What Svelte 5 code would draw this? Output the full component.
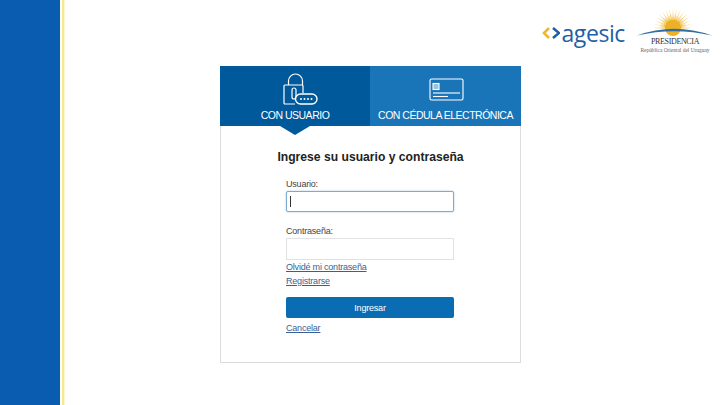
<script lang="ts">
  // sun rays for the presidency logo, alternating long and short
  const rays = Array.from({ length: 33 }, (_, i) => {
    const a = Math.PI + (i * Math.PI) / 32;
    const r = i % 2 ? 14 : 20;
    const cx = 36, cy = 21;
    const w = 0.07;
    const p = (ang: number, rad: number) =>
      `${(cx + Math.cos(ang) * rad).toFixed(1)},${(cy + Math.sin(ang) * rad).toFixed(1)}`;
    return `${p(a - w, 7)} ${p(a, r)} ${p(a + w, 7)}`;
  });
</script>

<div class="page">
  <div class="side"></div>
  <div class="stripe"></div>
  <main>
    <header>
      <div class="agesic">
        <svg width="19" height="12" viewBox="0 0 19 12" fill="none" stroke-width="2.6">
          <path d="M8 1 L3 6 L8 11" stroke="#f2b632" />
          <path d="M12 1 L18 6 L12 11" stroke="#1f5fa5" />
        </svg>
        <span>agesic</span>
      </div>
      <div class="presidencia">
        <svg width="76" height="29" viewBox="0 0 76 29">
          {#each rays as pts}
            <polygon points={pts} fill="#f0b92e" />
          {/each}
          <circle cx="36" cy="21" r="8" fill="#eeb027" />
          <path d="M0 28.500 Q37 15 75 28.500 Q37 20 0 28.500Z" fill="#2f6fa8" />
        </svg>
        <span class="pres-name">PRESIDENCIA</span>
        <span class="pres-sub">República Oriental del Uruguay</span>
      </div>
    </header>

    <section class="card">
      <div class="tabs">
        <div class="tab active">
          <svg class="lock" width="35" height="32" viewBox="0 0 35 32" fill="none" stroke="#fff" stroke-width="1.200">
            <path d="M5.500 12 V8 a7 7 0 0 1 14 0 V12" />
            <path d="M12 31 H2 a1 1 0 0 1 -1 -1 V13 a1 1 0 0 1 1 -1 H19 a1 1 0 0 1 1 1 V20" />
            <path d="M9 17 a2 2 0 0 1 4 0 V24 a2 2 0 0 1 -4 0Z" />
            <rect x="12.500" y="21" width="21.500" height="10" rx="5" stroke-width="1.400" fill="#00599a" />
            <g fill="#fff" stroke="none">
              <circle cx="18" cy="26" r="1" />
              <circle cx="21.500" cy="26" r="1" />
              <circle cx="25" cy="26" r="1" />
              <circle cx="28.500" cy="26" r="1" />
            </g>
          </svg>
          <span>CON USUARIO</span>
        </div>
        <div class="tab">
          <svg class="id-card" width="36" height="24" viewBox="0 0 36 24" fill="none" stroke="#fff" stroke-width="1.100">
            <rect x="1" y="1" width="33" height="21" rx="1.500" />
            <rect x="4" y="5.500" width="6" height="6" fill="#fff" fill-opacity="0.55" />
            <path d="M4 15 H31" />
            <path d="M4 18.500 H19" />
          </svg>
          <span>CON CÉDULA ELECTRÓNICA</span>
        </div>
      </div>
      <div class="notch"></div>

      <h1>Ingrese su usuario y contraseña</h1>

      <form>
        <label for="usuario">Usuario:</label>
        <div class="input focus" id="usuario"><i></i></div>

        <label class="second" for="clave">Contraseña:</label>
        <div class="input" id="clave"></div>

        <a class="forgot" href="#olvide">Olvidé mi contraseña</a>
        <a class="register" href="#registro">Registrarse</a>

        <button type="button">Ingresar</button>
        <a class="cancel" href="#cancelar">Cancelar</a>
      </form>
    </section>
  </main>
</div>

<style>
  :global(body) {
    margin: 0;
    background: #fff;
    font-family: "Liberation Sans", Arial, sans-serif;
  }

  .page {
    display: flex;
    width: 720px;
    height: 405px;
    overflow: hidden;
  }

  .side {
    width: 60px;
    background: #0a5cb0;
  }

  .stripe {
    width: 2px;
    margin-left: 2px;
    background: #f5e88e;
    border-right: 1px solid #fbf6cf;
  }

  main {
    flex: 1;
    display: flex;
    flex-direction: column;
    min-width: 0;
  }

  header {
    height: 66px;
    box-sizing: border-box;
    padding: 7px 7px 0 0;
    display: flex;
    justify-content: flex-end;
    align-items: flex-start;
    gap: 12px;
  }

  .agesic {
    display: flex;
    align-items: center;
    gap: 1px;
    margin-top: 14px;
  }

  .agesic span {
    font-family: "Open Sans", sans-serif;
    font-size: 23px;
    line-height: 24px;
    letter-spacing: -0.4px;
    color: #1f5fa5;
  }

  .presidencia {
    display: flex;
    flex-direction: column;
    align-items: center;
    width: 76px;
  }

  .pres-name {
    font-family: "Liberation Serif", serif;
    font-size: 8px;
    line-height: 9px;
    letter-spacing: -0.35px;
    color: #333;
    margin-top: 1px;
  }

  .pres-sub {
    font-family: "Liberation Serif", serif;
    font-size: 5.400px;
    line-height: 6px;
    color: #666;
    white-space: nowrap;
    margin-top: 1px;
  }

  .card {
    position: relative;
    width: 301px;
    height: 297px;
    box-sizing: border-box;
    margin-left: 155px;
    border: 1px solid #dcdcdc;
    border-top: 0;
    background: #fff;
  }

  .tabs {
    display: flex;
    height: 60px;
    margin: 0 -1px;
  }

  .tab {
    flex: 1;
    display: flex;
    flex-direction: column;
    align-items: center;
    justify-content: flex-end;
    gap: 4px;
    padding-bottom: 5px;
    background: #1a75b8;
    color: #fff;
    font-size: 10.500px;
    letter-spacing: -0.5px;
    line-height: 12px;
    white-space: nowrap;
  }

  .tab.active {
    flex: 0 0 150px;
    background: #00599a;
  }

  .lock {
    margin-left: 11px;
  }

  .id-card {
    margin: 0 0 3px 2px;
  }

  .notch {
    position: absolute;
    left: 59px;
    top: 60px;
    width: 0;
    height: 0;
    border-left: 15px solid transparent;
    border-right: 15px solid transparent;
    border-top: 9px solid #00599a;
  }

  h1 {
    margin: 24px 0 0;
    text-align: center;
    font-size: 12.150px;
    line-height: 14px;
    font-weight: 700;
    color: #222;
  }

  form {
    display: flex;
    flex-direction: column;
    align-items: flex-start;
    padding: 15px 65px 0;
    font-size: 9px;
    letter-spacing: -0.2px;
    line-height: 11px;
    color: #444;
  }

  label {
    margin-bottom: 1px;
  }

  label.second {
    margin-top: 14px;
  }

  .input {
    width: 168px;
    height: 22px;
    box-sizing: border-box;
    border: 1px solid #e2e2e2;
    background: #fff;
    display: flex;
    align-items: center;
    padding-left: 3px;
  }

  .input.focus {
    height: 21px;
    border: 1px solid #7fabd0;
    border-radius: 2px;
    box-shadow: 0 0 2px #9cc3e2;
  }

  .input i {
    display: block;
    width: 1px;
    height: 11px;
    background: #333;
  }

  a {
    color: #3a5f96;
    text-decoration: underline;
  }

  .forgot {
    margin-top: 2px;
  }

  .register {
    margin-top: 3px;
  }

  button {
    width: 168px;
    height: 21px;
    margin-top: 10px;
    border: 0;
    border-radius: 2px;
    background: #0a6db4;
    color: #fff;
    font: 9px "Liberation Sans", Arial, sans-serif;
    letter-spacing: -0.2px;
  }

  .cancel {
    margin-top: 5px;
  }
</style>
